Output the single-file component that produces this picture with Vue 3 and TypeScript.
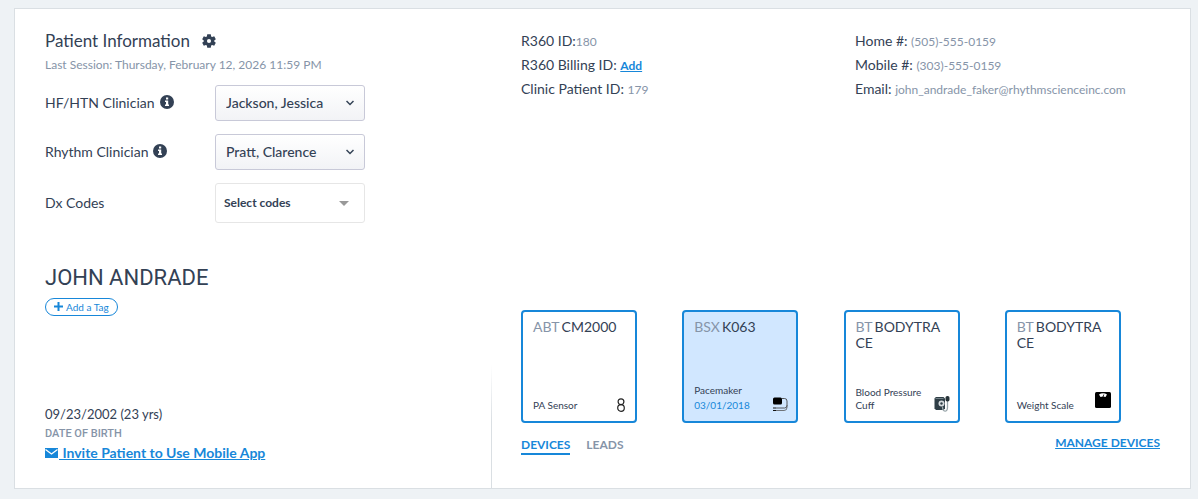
<script setup lang="ts">
import { ref } from 'vue'

interface Device {
  maker: string
  model: string
  kind: string
  date?: string
  icon: 'sensor' | 'pacemaker' | 'cuff' | 'scale'
  active?: boolean
}

const devices: Device[] = [
  { maker: 'ABT', model: 'CM2000', kind: 'PA Sensor', icon: 'sensor' },
  { maker: 'BSX', model: 'K063', kind: 'Pacemaker', date: '03/01/2018', icon: 'pacemaker', active: true },
  { maker: 'BT', model: 'BODYTRACE', kind: 'Blood Pressure Cuff', icon: 'cuff' },
  { maker: 'BT', model: 'BODYTRACE', kind: 'Weight Scale', icon: 'scale' },
]

const clinicians = [
  { id: 'hf', label: 'HF/HTN Clinician', value: 'Jackson, Jessica' },
  { id: 'rhythm', label: 'Rhythm Clinician', value: 'Pratt, Clarence' },
]

const contacts = [
  { label: 'Home #:', value: '(505)-555-0159' },
  { label: 'Mobile #:', value: '(303)-555-0159' },
  { label: 'Email:', value: 'john_andrade_faker@rhythmscienceinc.com' },
]

const tab = ref<'devices' | 'leads'>('devices')
</script>

<template>
  <main class="page">
    <section class="card">
      <div class="top">
        <div class="info">
          <h1 class="title">
            Patient Information
            <button class="plain" type="button" aria-label="Settings">
              <svg class="gear" viewBox="0 0 24 24"><path fill="currentColor" d="M9 .5h6l.7 3.600 1.700 1 3.500-1.200 2.800 5-2.700 2.400v1.400l2.700 2.400-2.800 5-3.500-1.200-1.700 1-.7 3.600H9l-.7-3.600-1.700-1-3.500 1.200-2.800-5L3 12.700v-1.400L.3 8.900l2.800-5 3.500 1.200 1.700-1zM12 8.500a3.500 3.500 0 1 0 0 7 3.500 3.500 0 0 0 0-7z" /></svg>
            </button>
          </h1>
          <p class="session">Last Session: Thursday, February 12, 2026 11:59 PM</p>
          <div v-for="c in clinicians" :key="c.id" class="field">
            <label :for="c.id">
              {{ c.label }}
              <svg class="info-icon" viewBox="0 0 14 14"><circle cx="7" cy="7" r="7" fill="currentColor" /><path fill="#fff" d="M6 2.500h2.200v2H6zM5 5.500h3.200V9.500H9V11H5V9.500h1V7H5z" /></svg>
            </label>
            <div class="select">
              <select :id="c.id"><option>{{ c.value }}</option></select>
              <svg class="chevron" viewBox="0 0 8 6"><path d="M.5 1 4 4.500 7.500 1" fill="none" stroke="currentColor" stroke-width="1.500" /></svg>
            </div>
          </div>
          <div class="field">
            <label for="dx">Dx Codes</label>
            <div class="select dx">
              <select id="dx"><option>Select codes</option></select>
              <svg class="caret" viewBox="0 0 10 5"><path d="M0 0h10L5 5z" fill="#999" /></svg>
            </div>
          </div>
        </div>
        <div class="facts">
          <p>R360 ID:<span>180</span></p>
          <p>R360 Billing ID: <a href="#">Add</a></p>
          <p>Clinic Patient ID: <span>179</span></p>
        </div>
        <div class="facts">
          <p v-for="c in contacts" :key="c.label">{{ c.label }} <span>{{ c.value }}</span></p>
        </div>
      </div>

      <div class="bottom">
        <div class="person">
          <h2>JOHN ANDRADE</h2>
          <button class="tag" type="button">
            <svg viewBox="0 0 9 9"><path d="M4.500 0v9M0 4.500h9" stroke="currentColor" stroke-width="2" /></svg>
            Add a Tag
          </button>
          <div class="birth">
            <p class="dob">09/23/2002 (23 yrs)</p>
            <p class="caption">DATE OF BIRTH</p>
            <a href="#" class="invite"><svg viewBox="0 0 13 10"><path fill="currentColor" d="M0 0h13v10H0z" /><path d="M.5 1.500 6.500 6l6-4.500" fill="none" stroke="#fff" stroke-width="1.300" /></svg><span>&nbsp;Invite Patient to Use Mobile App</span></a>
          </div>
        </div>

        <div class="devices">
          <ul>
            <li v-for="(d, i) in devices" :key="i" :class="{ active: d.active }">
              <p class="model"><span>{{ d.maker }}</span>{{ d.model }}</p>
              <div class="foot">
                <p class="kind">{{ d.kind }}<time v-if="d.date">{{ d.date }}</time></p>
                <svg v-if="d.icon === 'sensor'" class="i-sensor" viewBox="0 0 8 14"><g fill="none" stroke="#222" stroke-width="1.200"><ellipse cx="4" cy="3.700" rx="2.900" ry="2.900" /><ellipse cx="4" cy="10" rx="3.300" ry="3.300" /></g></svg>
                <svg v-else-if="d.icon === 'pacemaker'" class="i-pace" viewBox="0 0 15 15"><rect x="0" y=".5" width="9" height="7" rx="1.500" /><path d="M9 1.500h2.500a2.500 2.500 0 0 1 2.500 2.500v4.500a2.500 2.500 0 0 1-2.500 2.500H3" fill="none" stroke="#333" stroke-width=".8" /><path d="M14 8v2.500a3 3 0 0 1-3 3H3" fill="none" stroke="#555" stroke-width=".8" /><path d="M0 11h3M0 13.500h3" stroke="#111" stroke-width="1.200" /></svg>
                <svg v-else-if="d.icon === 'cuff'" class="i-cuff" viewBox="0 0 16 16"><path fill="#2f3e46" d="M.5 2.200 2 1h7.500l1.500 1.500v10L9.500 14H2L.5 12.500z" /><path d="M1.500 2.500h8" stroke="#87949a" stroke-width=".8" /><circle cx="7.500" cy="7.500" r="3" fill="#d5dadd" /><circle cx="7.500" cy="7.500" r="1.200" fill="#2f3e46" /><path d="M8.500 10.500c0 6 5 6 5 1V5" fill="none" stroke="#9aa6ab" stroke-width="1.300" /><rect x="11.500" y="0" width="4" height="5.500" rx="1.800" fill="#263238" /></svg>
                <svg v-else class="i-scale" viewBox="0 0 16 16"><rect width="16" height="16" rx="1.500" /><path fill="#fff" d="M4 2.500C6.500.8 9.500.8 12 2.500L10.500 5Q8 3.800 5.500 5z" /><path d="m8 5 .8-2.500" stroke="#000" stroke-width=".8" /></svg>
              </div>
            </li>
          </ul>
          <div class="actions">
            <div class="tabs">
              <button type="button" :class="{ on: tab === 'devices' }" @click="tab = 'devices'">DEVICES</button>
              <button type="button" :class="{ on: tab === 'leads' }" @click="tab = 'leads'">LEADS</button>
            </div>
            <a href="#" class="manage">MANAGE DEVICES</a>
          </div>
        </div>
      </div>
    </section>
  </main>
</template>

<style>
body {
  background: #eef2f5;
}
</style>

<style scoped>
* {
  box-sizing: border-box;
}
.page {
  padding: 8px 7px 10px 14px;
  font-family: Lato, "Noto Sans", sans-serif;
  font-size: 14px;
  color: #334155;
}
.card {
  background: #fff;
  border: 1px solid #dadfe3;
  padding: 20px 30px 0;
}
h1, h2, p, ul {
  margin: 0;
  padding: 0;
  font-weight: 400;
}
a {
  color: #1787d9;
  font-weight: 700;
}
button, select {
  font: inherit;
  color: inherit;
}
.plain {
  display: flex;
  border: 0;
  padding: 0;
  background: none;
}
.top {
  display: grid;
  grid-template-columns: 476fr 334fr 305fr;
}
.title {
  display: flex;
  align-items: center;
  gap: 12px;
  font-size: 17px;
  line-height: 24px;
}
.gear {
  width: 14px;
  height: 14px;
}
.session {
  font-size: 12px;
  line-height: 24px;
  color: #8694a8;
  margin-bottom: 8px;
}
.field {
  display: flex;
  align-items: center;
  margin-bottom: 13px;
}
.field label {
  display: flex;
  align-items: center;
  gap: 5px;
  width: 170px;
  padding-bottom: 2px;
}
.info-icon {
  width: 14px;
  height: 14px;
}
.select {
  display: grid;
  width: 150px;
  align-items: center;
}
.select > * {
  grid-area: 1 / 1;
}
select {
  appearance: none;
  width: 100%;
  height: 36px;
  padding: 0 10px 2px;
  border: 1px solid #c8c9d8;
  border-radius: 3px;
  background: linear-gradient(#fff, #f2f3f6);
  font-weight: 500;
}
.dx select {
  height: 40px;
  padding: 0 8px 2px;
  border-color: #e6e6e6;
  background: #fff;
  font-size: 12px;
  font-weight: 700;
}
.chevron {
  width: 8px;
  height: 6px;
  justify-self: end;
  margin-right: 11px;
  pointer-events: none;
}
.caret {
  width: 10px;
  height: 5px;
  justify-self: end;
  margin-right: 16px;
  pointer-events: none;
}
.facts {
  line-height: 24px;
}
.facts span, .facts a {
  font-size: 12px;
  line-height: 16px;
}
.facts span {
  color: #8694a8;
}
.bottom {
  display: grid;
  grid-template-columns: 476fr 639fr;
  margin-top: 28px;
}
.person {
  display: flex;
  flex-direction: column;
  align-items: flex-start;
  margin-right: 29px;
  border-right: 1px solid;
  border-image: linear-gradient(transparent 45%, #dadfe3 70%) 1;
}
h2 {
  font-family: Roboto, "Noto Sans", sans-serif;
  font-size: 22px;
  line-height: 28px;
}
.tag {
  display: flex;
  align-items: center;
  gap: 3px;
  height: 18px;
  margin-top: 6px;
  padding: 0 8px 1px;
  border: 1px solid #1787d9;
  border-radius: 9px;
  background: #fff;
  color: #1787d9;
  font-size: 10px;
}
.tag svg {
  width: 9px;
  height: 9px;
}
.birth {
  margin-top: 87px;
  padding-bottom: 25px;
}
.dob {
  font-size: 13px;
  line-height: 22px;
}
.caption {
  font-family: Roboto, "Noto Sans", sans-serif;
  font-size: 11px;
  line-height: 18px;
  font-weight: 500;
  color: #8694a8;
}
.invite {
  display: flex;
  align-items: center;
  line-height: 20px;
  text-decoration: none;
}
.invite span {
  text-decoration: underline;
}
.invite svg {
  width: 13px;
  height: 10px;
  margin-right: 1px;
}
.devices {
  padding-top: 46px;
}
ul {
  display: grid;
  grid-template-columns: repeat(4, 1fr);
  gap: 6px;
  list-style: none;
}
li {
  display: flex;
  flex-direction: column;
  justify-content: space-between;
  width: 116px;
  height: 113px;
  padding: 7px 8px 9px 10px;
  border: 2px solid #1787d9;
  border-radius: 4px;
}
li.active {
  background: #d1e7ff;
}
.model {
  line-height: 16px;
  word-break: break-all;
  padding-right: 6px;
}
.model span {
  color: #8694a8;
  margin-right: 2px;
}
.foot {
  display: flex;
  justify-content: space-between;
  align-items: flex-end;
}
.kind {
  font-size: 10px;
  line-height: 13px;
}
.kind time {
  display: block;
  margin-top: 2px;
  color: #1787d9;
}
.foot svg {
  flex: none;
}
.i-sensor {
  width: 8px;
  height: 14px;
  margin-right: 2px;
}
.i-pace {
  width: 15px;
  height: 15px;
}
.i-cuff, .i-scale {
  width: 16px;
  height: 16px;
}
.i-scale {
  margin-bottom: 4px;
}
.actions {
  display: flex;
  justify-content: space-between;
  align-items: flex-start;
  margin-top: 12px;
}
.tabs {
  display: flex;
  gap: 16px;
}
.tabs button {
  border: 0;
  border-bottom: 2px solid transparent;
  padding: 2px 0 0;
  background: none;
  font-size: 12px;
  line-height: 16px;
  font-weight: 700;
  color: #8694a8;
}
.tabs button.on {
  color: #1787d9;
  border-bottom-color: #1787d9;
}
.manage {
  font-size: 12px;
  line-height: 16px;
}
</style>
